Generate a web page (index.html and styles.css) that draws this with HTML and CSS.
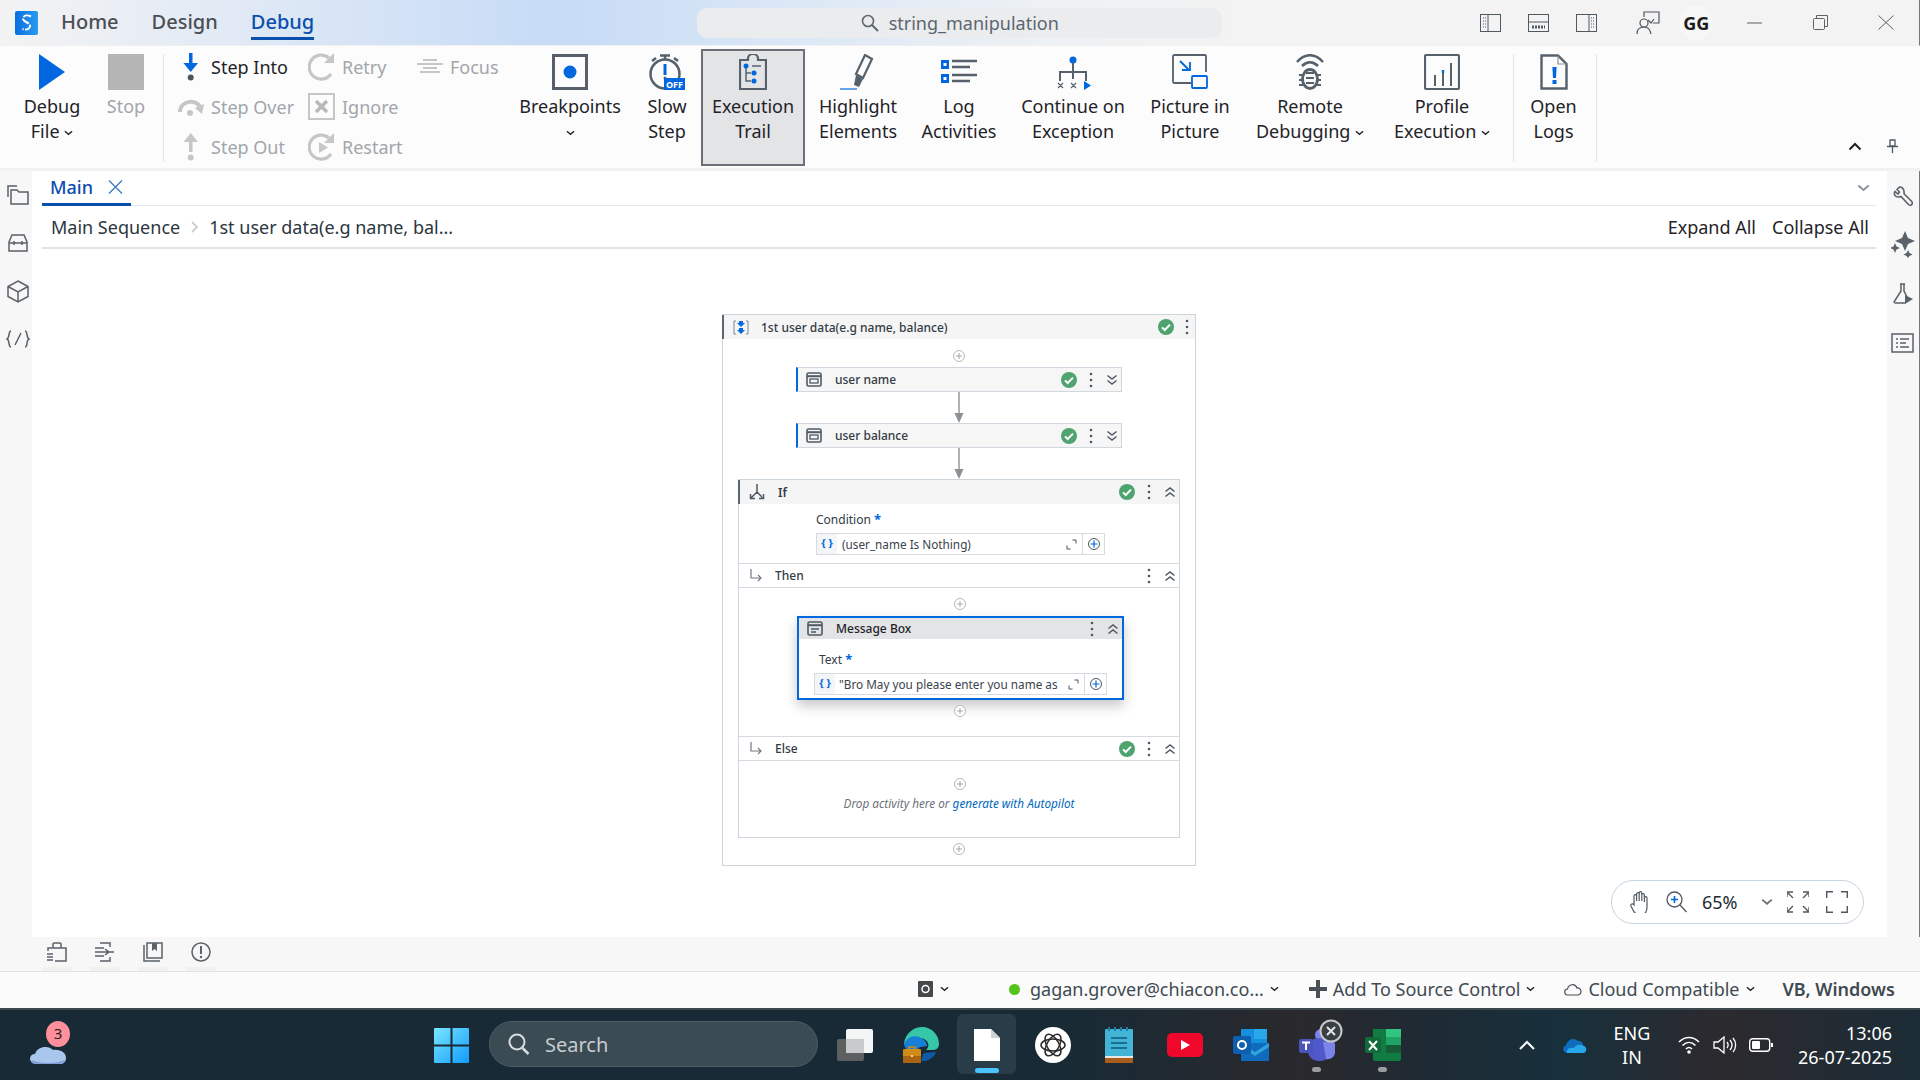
FILE: index.html
```html
<!DOCTYPE html>
<html lang="en">
<head>
<meta charset="UTF-8">
<meta name="viewport" content="width=device-width, initial-scale=1.0">
<title>string_manipulation - Debug</title>
<link rel="stylesheet" href="styles.css">
</head>
<body>
  <!-- shared small icons -->
  <svg class="defs" width="0" height="0">
    <symbol id="ok" viewBox="0 0 16 16"><circle cx="8" cy="8" r="8" fill="#4ea36f"/><path d="M4 8.400l2.700 2.600L12 5.600" fill="none" stroke="#fff" stroke-width="2"/></symbol>
    <symbol id="dots" viewBox="0 0 4 16"><circle cx="2" cy="2" r="1.300"/><circle cx="2" cy="8" r="1.300"/><circle cx="2" cy="14" r="1.300"/></symbol>
    <symbol id="dbl-down" viewBox="0 0 12 12"><path d="M1.500 1.500L6 5l4.500-3.500M1.500 6.500L6 10l4.500-3.500" fill="none" stroke="currentColor" stroke-width="1.500"/></symbol>
    <symbol id="dbl-up" viewBox="0 0 12 12"><path d="M1.500 5.500L6 2l4.500 3.500M1.500 10.500L6 7l4.500 3.500" fill="none" stroke="currentColor" stroke-width="1.500"/></symbol>
    <symbol id="add" viewBox="0 0 14 14"><circle cx="7" cy="7" r="5.500" fill="#fff" stroke="#b5b9bd"/><path d="M7 4v6M4 7h6" stroke="#a3a8ad"/></symbol>
    <symbol id="add-blue" viewBox="0 0 14 14"><circle cx="7" cy="7" r="5.500" fill="none" stroke="#4a5560"/><path d="M7 3.500v7M3.500 7h7" stroke="#0067df" stroke-width="1.200"/></symbol>
    <symbol id="grow" viewBox="0 0 11 11"><path d="M6.500 1H10v3.500M1 6.500V10h3.500" fill="none" stroke="#4a5560"/></symbol>
    <symbol id="branch" viewBox="0 0 14 14"><path d="M2 0v9h10M9 6l3 3-3 3" fill="none" stroke="#717a82" stroke-width="1.200"/></symbol>
    <symbol id="assign" viewBox="0 0 16 15"><rect x="1" y="1" width="14" height="13" rx="1.500" fill="none" stroke="#4f5a64" stroke-width="1.600"/><path d="M1 4.200h14" stroke="#4f5a64" stroke-width="2"/><rect x="4" y="7" width="8" height="4" fill="none" stroke="#4f5a64" stroke-width="1.300"/></symbol>
    <symbol id="down" viewBox="0 0 10 6"><path d="M1 1l4 3.500L9 1" fill="none" stroke="currentColor" stroke-width="1.500"/></symbol>
    <symbol id="arrow" viewBox="0 0 10 31"><path d="M5 0v22" stroke="#8d9093" stroke-width="1.400"/><path d="M0.500 21h9L5 31z" fill="#8d9093"/></symbol>
  </svg>

  <header class="titlebar">
    <svg class="logo" width="23" height="24" viewBox="0 0 23 24"><defs><linearGradient id="logoblue" x1="0" y1="0" x2="1" y2="0"><stop offset="0" stop-color="#0a6fe0"/><stop offset="1" stop-color="#2a9bf0"/></linearGradient></defs><rect width="23" height="24" rx="2" fill="url(#logoblue)"/><path d="M16 5.500C12 3.500 7.500 5 8 8s6.500 3.500 7 6.500-3.500 5-7.500 3.500" fill="none" stroke="#fff" stroke-width="2" stroke-dasharray="8 1.500"/></svg>
    <nav class="title-tabs">
      <span>Home</span>
      <span>Design</span>
      <span class="is-active">Debug</span>
    </nav>
    <div class="title-search">
      <svg width="18" height="18" viewBox="0 0 18 18"><circle cx="7" cy="7" r="5.500" fill="none" stroke="#5d6770" stroke-width="1.600"/><path d="M11 11l6 6" stroke="#5d6770" stroke-width="2"/></svg>
      <span>string_manipulation</span>
    </div>
    <div class="title-icons">
      <svg class="panel-l" width="21" height="18" viewBox="0 0 21 18"><rect x=".5" y=".5" width="20" height="17" fill="none" stroke="#4f5961"/><path d="M8 0v18" stroke="#4f5961"/><path d="M3 4h3M3 7h3M3 10h3M3 13h3" stroke="#4f5961" stroke-dasharray="1 1"/></svg>
      <svg class="panel-b" width="21" height="18" viewBox="0 0 21 18"><rect x=".5" y=".5" width="20" height="17" fill="none" stroke="#4f5961"/><path d="M0 8h21" stroke="#4f5961"/><path d="M4 13h13" stroke="#4f5961" stroke-width="3" stroke-dasharray="2 1"/></svg>
      <svg class="panel-r" width="21" height="18" viewBox="0 0 21 18"><rect x=".5" y=".5" width="20" height="17" fill="none" stroke="#4f5961"/><path d="M13 0v18" stroke="#4f5961"/><path d="M15 4h3M15 7h3M15 10h3M15 13h3" stroke="#4f5961" stroke-dasharray="1 1"/></svg>
      <svg class="feedback" width="24" height="23" viewBox="0 0 24 23"><circle cx="8" cy="12" r="4" fill="none" stroke="#4f5961" stroke-width="1.200"/><path d="M1 23c0-5 3-7 7-7s6 2 7 7M8 6V1h15v11h-6M12 9l3 3 3-4" fill="none" stroke="#4f5961" stroke-width="1.200"/></svg>
      <span class="avatar">GG</span>
      <svg class="win-min" width="15" height="2" viewBox="0 0 15 2"><path d="M0 1h15" stroke="#5b6269"/></svg>
      <svg class="win-max" width="15" height="15" viewBox="0 0 15 15"><rect x=".5" y="3.500" width="11" height="11" rx="1" fill="none" stroke="#5b6269"/><path d="M3.500 3V.5H14.500V11.500H12" fill="none" stroke="#5b6269"/></svg>
      <svg class="win-close" width="16" height="15" viewBox="0 0 16 15"><path d="M.5.5l15 14M15.500.5L.5 14.500" stroke="#5b6269"/></svg>
    </div>
  </header>

  <section class="ribbon">
    <div class="rbtn">
      <svg width="26" height="36" viewBox="0 0 26 36"><path d="M0 0l26 18L0 36z" fill="#0067df"/></svg>
      <span>Debug<br>File <svg class="caret" width="9" height="6"><use href="#down"/></svg></span>
    </div>
    <div class="rbtn is-off">
      <svg width="36" height="36" viewBox="0 0 36 36"><rect width="36" height="36" fill="#b5b5b5"/></svg>
      <span>Stop</span>
    </div>
    <div class="rsep"></div>

    <div class="steps">
      <div class="step">
        <svg width="28" height="28" viewBox="0 0 28 28"><path d="M12 0h3.500v10H21l-7.300 9-7.300-9H12z" fill="#0067df"/><circle cx="13.700" cy="24.500" r="3" fill="#4c5660"/></svg>
        <span>Step Into</span>
      </div>
      <div class="step is-off">
        <svg width="28" height="28" viewBox="0 0 28 28"><path d="M3 19C3 7 21 5 24 16" fill="none" stroke="#c6c6c6" stroke-width="4"/><path d="M27 11l-2 10-7-6z" fill="#c6c6c6"/><circle cx="13" cy="20" r="3" fill="#c6c6c6"/></svg>
        <span>Step Over</span>
      </div>
      <div class="step is-off">
        <svg width="28" height="28" viewBox="0 0 28 28"><path d="M12 19V9H6.500L13.700 0 21 9h-5.500v10z" fill="#c6c6c6"/><circle cx="13.700" cy="24.500" r="3" fill="#c6c6c6"/></svg>
        <span>Step Out</span>
      </div>
      <div class="step is-off">
        <svg width="28" height="28" viewBox="0 0 28 28"><path d="M23 21A12 12 0 1 1 21 5" fill="none" stroke="#c6c6c6" stroke-width="3.200"/><path d="M26 0v10H16z" fill="#c6c6c6"/></svg>
        <span>Retry</span>
      </div>
      <div class="step is-off">
        <svg width="28" height="28" viewBox="0 0 28 28"><rect x="1" y="1" width="25" height="25" fill="none" stroke="#c6c6c6" stroke-width="2"/><path d="M8 8l11 11M19 8L8 19" stroke="#b9b9b9" stroke-width="3.500"/></svg>
        <span>Ignore</span>
      </div>
      <div class="step is-off">
        <svg width="28" height="28" viewBox="0 0 28 28"><path d="M23 21A12 12 0 1 1 21 5" fill="none" stroke="#c6c6c6" stroke-width="3.200"/><path d="M26 0v10H16z" fill="#c6c6c6"/><path d="M11 9l9 5.500-9 5.500z" fill="#c6c6c6"/></svg>
        <span>Restart</span>
      </div>
      <div class="step is-off">
        <svg width="28" height="28" viewBox="0 0 28 28"><path d="M7 7h14M1 11h26M7 15h14M4 19h20" stroke="#c6c6c6" stroke-width="2"/></svg>
        <span>Focus</span>
      </div>
    </div>

    <div class="rbtn">
      <svg width="36" height="36" viewBox="0 0 36 36"><rect x="1.500" y="1.500" width="33" height="33" fill="none" stroke="#56616b" stroke-width="3"/><circle cx="18" cy="18" r="6.500" fill="#0067df"/></svg>
      <span>Breakpoints<br><svg class="caret" width="9" height="6"><use href="#down"/></svg></span>
    </div>
    <div class="rbtn rbtn-slow">
      <svg width="36" height="36" viewBox="0 0 36 36"><circle cx="16" cy="20" r="14.500" fill="none" stroke="#56616b" stroke-width="2.500"/><path d="M11 1.500h10M16 1v5M3 7l4-3M29 7l-4-3" stroke="#56616b" stroke-width="2.500"/><path d="M16 10v11" stroke="#0067df" stroke-width="3"/><circle cx="16" cy="24" r="1.500" fill="#56616b"/><rect x="15" y="24" width="21" height="12" fill="#0067df"/><text x="25.500" y="33.500" class="off-text">OFF</text></svg>
      <span>Slow<br>Step</span>
    </div>
    <div class="rbtn is-on">
      <svg width="28" height="36" viewBox="0 0 28 36"><path d="M9 6V4.500a5 4.500 0 0 1 10 0V6h8v29H1V6z" fill="none" stroke="#56616b" stroke-width="2.200"/><path d="M7 11v16h5M7 19h5" fill="none" stroke="#56616b" stroke-width="1.500"/><circle cx="7" cy="12" r="2.500" fill="#0067df"/><circle cx="15" cy="19" r="2.500" fill="#0067df"/><circle cx="15" cy="27" r="2.500" fill="#0067df"/><path d="M13 12h9" stroke="#56616b" stroke-width="1.500"/></svg>
      <span>Execution<br>Trail</span>
    </div>
    <div class="rbtn">
      <svg width="36" height="36" viewBox="0 0 36 36"><path d="M25 1l7 4-9 19-7-4z" fill="none" stroke="#56616b" stroke-width="2.200"/><path d="M16 21l7 4-4 8-5-2z" fill="#56616b"/><path d="M0 35h17" stroke="#0067df" stroke-width="1.200"/></svg>
      <span>Highlight<br>Elements</span>
    </div>
    <div class="rbtn">
      <svg width="36" height="36" viewBox="0 0 36 36"><rect x="0" y="6" width="8" height="9" fill="#0067df"/><rect x="0" y="20" width="8" height="9" fill="#0067df"/><rect x="2.500" y="9" width="3" height="3" fill="#fff"/><rect x="2.500" y="23" width="3" height="3" fill="#fff"/><path d="M11 7h25M11 13h18M11 21h25M11 27h18" stroke="#56616b" stroke-width="2.400"/></svg>
      <span>Log<br>Activities</span>
    </div>
    <div class="rbtn">
      <svg width="36" height="36" viewBox="0 0 36 36"><circle cx="18" cy="6" r="3.500" fill="#0067df"/><path d="M18 9v9M5 27v-9h26v9M18 18v7" fill="none" stroke="#56616b" stroke-width="2"/><path d="M3 29l5 5M8 29l-5 5M16 29l5 5M21 29l-5 5" stroke="#56616b" stroke-width="1.200"/><path d="M29 27l7 4.500-7 4.500z" fill="#0067df"/></svg>
      <span>Continue on<br>Exception</span>
    </div>
    <div class="rbtn">
      <svg width="36" height="36" viewBox="0 0 36 36"><path d="M19 29H2.500a1.500 1.500 0 0 1-1.500-1.500V2.500A1.500 1.500 0 0 1 2.500 1H33a1 1 0 0 1 1 1v16" fill="none" stroke="#56616b" stroke-width="1.800"/><rect x="20" y="22" width="15" height="12" rx="1" fill="none" stroke="#0067df" stroke-width="1.800"/><path d="M8 7l9 9M10 16h8V8" fill="none" stroke="#0067df" stroke-width="1.800"/></svg>
      <span>Picture in<br>Picture</span>
    </div>
    <div class="rbtn">
      <svg width="36" height="36" viewBox="0 0 36 36"><path d="M5 8c8-9 18-9 26 0M10 12c5-5 11-5 16 0" fill="none" stroke="#56616b" stroke-width="2.600"/><ellipse cx="18" cy="25" rx="7.500" ry="9.500" fill="none" stroke="#56616b" stroke-width="2.800"/><path d="M14 19h8M14 24h8M14 29h8M7 21h4M7 26h4M7 31h4M25 21h4M25 26h4M25 31h4" stroke="#56616b" stroke-width="2"/></svg>
      <span>Remote<br>Debugging <svg class="caret" width="9" height="6"><use href="#down"/></svg></span>
    </div>
    <div class="rbtn">
      <svg width="36" height="36" viewBox="0 0 36 36"><rect x="1" y="1" width="34" height="34" rx="1.500" fill="none" stroke="#56616b" stroke-width="2.200"/><path d="M11 21v11M19 16v16M27 9v23" stroke="#56616b" stroke-width="2"/><path d="M19 16v3" stroke="#0067df" stroke-width="2.400"/></svg>
      <span>Profile<br>Execution <svg class="caret" width="9" height="6"><use href="#down"/></svg></span>
    </div>
    <div class="rsep rsep-b"></div>
    <div class="rbtn">
      <svg width="28" height="36" viewBox="0 0 28 36"><path d="M1.500 1.500H18L26.500 10v24.500h-25z" fill="none" stroke="#56616b" stroke-width="2.400"/><path d="M18 1.500V10h8.500" fill="none" stroke="#8a939b" stroke-width="1.200"/><path d="M12.400 13h4.200l-.6 11h-3z" fill="#0067df"/><rect x="12.500" y="26" width="4" height="4" fill="#0067df"/></svg>
      <span>Open<br>Logs</span>
    </div>
    <div class="rsep rsep-c"></div>
    <div class="ribbon-end">
      <svg width="14" height="9" viewBox="0 0 14 9"><path d="M1.500 7.500L7 2l5.500 5.500" fill="none" stroke="#222" stroke-width="2"/></svg>
      <svg width="11" height="14" viewBox="0 0 11 14"><path d="M2.500 1h6M3 1v6h5V1M0 7.500h11M5.500 8v6" fill="none" stroke="#4f5961" stroke-width="1.300"/></svg>
    </div>
  </section>

  <div class="workspace">
    <aside class="rail">
      <span class="rail-slot"><svg width="22" height="20" viewBox="0 0 22 20"><path d="M1 12V1h9" fill="none" stroke="#5b6269" stroke-width="1.500"/><path d="M4 5v14h17V7H12l-2-2z" fill="none" stroke="#5b6269" stroke-width="1.500"/></svg></span>
      <span class="rail-slot"><svg width="20" height="18" viewBox="0 0 20 18"><path d="M1 8l3-7h12l3 7v9H1zM1 9h18M6 7v4M14 7v4" fill="none" stroke="#5b6269" stroke-width="1.500"/></svg></span>
      <span class="rail-slot"><svg width="22" height="23" viewBox="0 0 22 23"><path d="M11 1l10 5.500v10L11 22 1 16.500v-10zM1 6.500l10 5.500 10-5.500M11 12v10" fill="none" stroke="#5b6269" stroke-width="1.500"/></svg></span>
      <span class="rail-slot"><svg width="24" height="18" viewBox="0 0 24 18"><path d="M5 1C2 1 4 8 1 9c3 1 1 8 4 8M19 1c3 0 1 7 4 8-3 1-1 8-4 8M9 15l6-12" fill="none" stroke="#5b6269" stroke-width="1.500"/></svg></span>
    </aside>

    <main class="canvas-col">
      <div class="tabs">
        <div class="tab">Main
          <svg width="15" height="14" viewBox="0 0 15 14"><path d="M1 .5l13 13M14 .5l-13 13" stroke="#3b78c4" stroke-width="1.300"/></svg>
        </div>
        <svg class="tabs-more" width="13" height="8"><use href="#down"/></svg>
      </div>
      <div class="crumbs">
        <span>Main Sequence</span>
        <svg width="7" height="12" viewBox="0 0 7 12"><path d="M1 1l5 5-5 5" fill="none" stroke="#c9cfd5" stroke-width="1.800"/></svg>
        <span>1st user data(e.g name, bal...</span>
        <span class="crumbs-act">Expand All</span>
        <span class="crumbs-act">Collapse All</span>
      </div>

      <div class="canvas">
        <div class="seq">
          <div class="head head-main">
            <svg class="head-ico" width="16" height="15" viewBox="0 0 16 15"><path d="M3 1H1v13h2M13 1h2v13h-2" fill="none" stroke="#7b858e"/><path d="M6 1h4v2h2L8 7 4 3h2zM6 8h4v2h2l-4 4-4-4h2z" fill="#0067df"/></svg>
            <span class="head-txt">1st user data(e.g name, balance)</span>
            <svg class="ok" width="16" height="16"><use href="#ok"/></svg>
            <svg class="dots" width="4" height="16"><use href="#dots"/></svg>
          </div>
          <svg class="plus" width="14" height="14"><use href="#add"/></svg>
          <div class="card">
            <svg class="head-ico" width="16" height="15"><use href="#assign"/></svg>
            <span class="head-txt">user name</span>
            <svg class="ok" width="16" height="16"><use href="#ok"/></svg>
            <svg class="dots" width="4" height="16"><use href="#dots"/></svg>
            <svg class="chev" width="12" height="12"><use href="#dbl-down"/></svg>
          </div>
          <svg class="link" width="10" height="31"><use href="#arrow"/></svg>
          <div class="card">
            <svg class="head-ico" width="16" height="15"><use href="#assign"/></svg>
            <span class="head-txt">user balance</span>
            <svg class="ok" width="16" height="16"><use href="#ok"/></svg>
            <svg class="dots" width="4" height="16"><use href="#dots"/></svg>
            <svg class="chev" width="12" height="12"><use href="#dbl-down"/></svg>
          </div>
          <svg class="link link-b" width="10" height="31"><use href="#arrow"/></svg>

          <div class="ifbox">
            <div class="head head-if">
              <svg class="head-ico" width="16" height="16" viewBox="0 0 16 16"><path d="M8 0v8M8 8l-6 6M8 8l6 6M1.500 10v4.500H6M14.500 10v4.500H10" fill="none" stroke="#4f5a64" stroke-width="1.500"/></svg>
              <span class="head-txt head-strong">If</span>
              <svg class="ok" width="16" height="16"><use href="#ok"/></svg>
              <svg class="dots" width="4" height="16"><use href="#dots"/></svg>
              <svg class="chev" width="12" height="12"><use href="#dbl-up"/></svg>
            </div>
            <label class="lbl lbl-cond">Condition <b>*</b></label>
            <div class="field field-cond">
              <span class="brace">{ }</span>
              <span class="field-val">(user_name Is Nothing)</span>
              <svg width="11" height="11"><use href="#grow"/></svg>
              <span class="field-add"><svg width="14" height="14"><use href="#add-blue"/></svg></span>
            </div>

            <div class="branch">
              <svg width="14" height="14"><use href="#branch"/></svg>
              <span class="head-txt">Then</span>
              <svg class="dots" width="4" height="16"><use href="#dots"/></svg>
              <svg class="chev" width="12" height="12"><use href="#dbl-up"/></svg>
            </div>
            <svg class="plus plus-then" width="14" height="14"><use href="#add"/></svg>
            <div class="msgbox">
              <div class="msg-head">
                <svg class="head-ico" width="16" height="15" viewBox="0 0 16 15"><rect x="1" y="1" width="14" height="13" rx="1.500" fill="none" stroke="#4f5a64" stroke-width="1.600"/><path d="M1 4.200h14" stroke="#4f5a64" stroke-width="2"/><path d="M4 8h8M4 11h5" stroke="#4f5a64" stroke-width="1.300"/></svg>
                <span class="head-txt">Message Box</span>
                <svg class="dots" width="4" height="16"><use href="#dots"/></svg>
                <svg class="chev" width="12" height="12"><use href="#dbl-up"/></svg>
              </div>
              <label class="lbl lbl-text">Text <b>*</b></label>
              <div class="field field-text">
                <span class="brace">{ }</span>
                <span class="field-val">"Bro May you please enter you name as</span>
                <svg width="11" height="11"><use href="#grow"/></svg>
                <span class="field-add"><svg width="14" height="14"><use href="#add-blue"/></svg></span>
              </div>
            </div>
            <svg class="plus plus-then plus-after" width="14" height="14"><use href="#add"/></svg>

            <div class="branch">
              <svg width="14" height="14"><use href="#branch"/></svg>
              <span class="head-txt">Else</span>
              <svg class="ok" width="16" height="16"><use href="#ok"/></svg>
              <svg class="dots" width="4" height="16"><use href="#dots"/></svg>
              <svg class="chev" width="12" height="12"><use href="#dbl-up"/></svg>
            </div>
            <svg class="plus plus-then plus-else" width="14" height="14"><use href="#add"/></svg>
            <p class="drop">Drop activity here or <a href="#">generate with Autopilot</a></p>
          </div>
          <svg class="plus plus-end" width="14" height="14"><use href="#add"/></svg>
        </div>

        <div class="zoombar">
          <svg class="z-hand" width="20" height="22" viewBox="0 0 20 22"><path d="M4 12V5a1.300 1.300 0 0 1 2.600 0v5-7a1.300 1.300 0 0 1 2.600 0v7-8a1.300 1.300 0 0 1 2.600 0v8-6a1.300 1.300 0 0 1 2.600 0v7-4a1.300 1.300 0 0 1 2.600 0v9c0 5-2.500 8-7 8-4 0-5.500-2-7-5l-2-4c-.8-2 1.500-3 3-1z" fill="none" stroke="#4f5961" stroke-width="1.200"/></svg>
          <svg class="z-mag" width="21" height="22" viewBox="0 0 21 22"><circle cx="8.500" cy="8.500" r="7.500" fill="none" stroke="#4f5961" stroke-width="1.300"/><path d="M14 14l6.500 7" stroke="#4f5961" stroke-width="1.300"/><path d="M8.500 5v7M5 8.500h7" stroke="#0067df" stroke-width="1.600"/></svg>
          <span class="z-val">65%</span>
          <svg class="z-down" width="12" height="8"><use href="#down"/></svg>
          <svg class="z-fit" width="22" height="22" viewBox="0 0 22 22"><path d="M0 6V1h6M16 1h6v5M22 16v5h-6M6 21H0v-5M1 2l5 5M21 2l-5 5M21 20l-5-5M1 20l5-5" fill="none" stroke="#4f5961" stroke-width="1.400"/></svg>
          <svg class="z-full" width="22" height="22" viewBox="0 0 22 22"><path d="M.7 7V.7H7M15 .7h6.300V7M21.300 15v6.300H15M7 21.300H.7V15" fill="none" stroke="#4f5961" stroke-width="1.400"/></svg>
        </div>
      </div>
    </main>

    <aside class="rail rail-right">
      <span class="rail-slot"><svg width="20" height="20" viewBox="0 0 20 20"><path d="M6.500 1L4 3.500 6.500 6 5 8 2 5.500C.5 8 2 11.500 6 11l2-.5 7.500 8c1 1 2.500 1 3.300 0s.7-2.200-.3-3.200l-7.500-7.500c.5-3.500-1-7-4.500-6.800z" fill="none" stroke="#5b6269" stroke-width="1.600"/></svg></span>
      <span class="rail-slot"><svg width="24" height="27" viewBox="0 0 24 27"><path d="M14 0l3 7 7 3-7 3-3 7-3-7-7-3 7-3zM4 12l1.500 3.500L9 17l-3.500 1.500L4 22l-1.500-3.500L-1 17l3.500-1.500zM17 19l1.500 3 3 1.500-3 1.500-1.500 2-1.500-2-3-1.500 3-1.500z" fill="#5b6269"/></svg></span>
      <span class="rail-slot"><svg width="20" height="21" viewBox="0 0 20 21"><path d="M7 1h5M8 1v7L1 19c0 1 1 1 2 1h9M11 1v7l3 6" fill="none" stroke="#5b6269" stroke-width="1.500"/><path d="M4 15h7M12 12l8 4-8 5z" fill="#5b6269"/></svg></span>
      <span class="rail-slot rail-list"><svg width="23" height="20" viewBox="0 0 23 20"><rect x="1" y="1" width="21" height="18" fill="none" stroke="#5b6269" stroke-width="1.500"/><path d="M5 6h2M9 6h9M5 10h2M9 10h6M5 14h2M9 14h9" stroke="#5b6269" stroke-width="1.500"/></svg></span>
    </aside>
  </div>

  <div class="panelbar">
    <span class="panel-btn"><svg width="20" height="20" viewBox="0 0 20 20"><path d="M1 9V6h18v13H8M6 6V2a1 1 0 0 1 1-1h6a1 1 0 0 1 1 1v4" fill="none" stroke="#5b6269" stroke-width="1.500"/><path d="M0 12h6M0 15h6M0 18h6" stroke="#5b6269" stroke-width="1.500"/></svg></span>
    <span class="panel-btn"><svg width="20" height="20" viewBox="0 0 20 20"><path d="M5 1h10v4M15 15v4H5M0 6h9M0 10h13M0 14h9M10 7l4 3-4 3M14 10h5" fill="none" stroke="#5b6269" stroke-width="1.500"/></svg></span>
    <span class="panel-btn"><svg width="20" height="20" viewBox="0 0 20 20"><path d="M1 3v16h16" fill="none" stroke="#5b6269" stroke-width="1.500"/><rect x="4" y="1" width="15" height="15" fill="none" stroke="#5b6269" stroke-width="1.500"/><path d="M9 1v8l2.500-2L14 9V1" fill="#5b6269"/></svg></span>
    <span class="panel-btn"><svg width="20" height="20" viewBox="0 0 20 20"><circle cx="10" cy="10" r="9" fill="none" stroke="#5b6269" stroke-width="1.500"/><path d="M10 4v8" stroke="#5b6269" stroke-width="2"/><circle cx="10" cy="15" r="1.200" fill="#5b6269"/></svg></span>
  </div>

  <footer class="statusbar">
    <span class="st-box"><svg width="15" height="16" viewBox="0 0 15 16"><rect width="15" height="16" rx="1" fill="#46494c"/><circle cx="7.500" cy="8" r="3.500" fill="none" stroke="#fff" stroke-width="1.500"/></svg><svg class="caret" width="9" height="6"><use href="#down"/></svg></span>
    <span class="st-item st-user"><i class="dot-on"></i>gagan.grover@chiacon.co... <svg class="caret" width="9" height="6"><use href="#down"/></svg></span>
    <span class="st-item st-source"><svg width="18" height="18" viewBox="0 0 18 18"><path d="M9 0v18M0 9h18" stroke="#4a5057" stroke-width="4"/></svg>Add To Source Control <svg class="caret" width="9" height="6"><use href="#down"/></svg></span>
    <span class="st-item st-cloud"><svg width="18" height="13" viewBox="0 0 18 13"><path d="M4 12a3 3 0 0 1-.5-6C4.500 1 11 0 13 5c5-.5 5.500 7 .5 7z" fill="none" stroke="#4a5057" stroke-width="1.200"/></svg>Cloud Compatible <svg class="caret" width="9" height="6"><use href="#down"/></svg></span>
    <span class="st-item st-lang">VB, Windows</span>
  </footer>

  <div class="taskbar">
    <div class="tb-weather">
      <svg width="36" height="24" viewBox="0 0 36 24"><path d="M6 23C2 23 0 20 0 17.500S2 13 5 13c2-8 14-9 18-4 8-1 13 3 13 8 0 4-3 6-6 6z" fill="#a9c6ec"/><path d="M1 19c10 4 24 4 34 0-1 3-3 4-5 4H6c-2 0-4-1-5-4z" fill="#7f9fd8"/></svg>
      <span class="tb-badge">3</span>
    </div>
    <svg class="tb-start" width="35" height="35" viewBox="0 0 35 35"><defs><linearGradient id="winblue" x1="0" y1="0" x2="1" y2="1"><stop offset="0" stop-color="#7ae7fe"/><stop offset="1" stop-color="#109bff"/></linearGradient></defs><path d="M1 0h15.500v16.500H0V1a1 1 0 0 1 1-1zM18.500 0H34a1 1 0 0 1 1 1v15.500H18.500zM0 18.500h16.500V35H1a1 1 0 0 1-1-1zM18.500 18.500H35V34a1 1 0 0 1-1 1H18.500z" fill="url(#winblue)"/></svg>
    <div class="tb-search">
      <svg width="22" height="22" viewBox="0 0 22 22"><circle cx="9" cy="9" r="7.500" fill="none" stroke="#d8dcdf" stroke-width="2"/><path d="M14.500 15l6 6" stroke="#d8dcdf" stroke-width="2.500"/></svg>
      <span>Search</span>
    </div>
    <div class="tb-apps">
      <span class="tb-app"><svg width="36" height="32" viewBox="0 0 36 32"><rect x="0" y="10" width="27" height="22" rx="2" fill="#5d5f60"/><rect x="9" y="0" width="27" height="24" rx="2" fill="#f4f5f5"/><rect x="9" y="10" width="18" height="14" fill="#c9cacb"/></svg></span>
      <span class="tb-app"><svg width="36" height="36" viewBox="0 0 36 36"><path d="M1 17C2 6 11 0 19 0c10 0 17 8 17 17 0 3-2 6-6 6h-7c2-2 3-4 2-7-2-5-9-6-13-3-5 3-9 6-11 4z" fill="#36c6a8"/><path d="M1 17c3-7 10-9 15-7 5 2 8 5 8 9l-6 1c-4 0-4 6-2 9-7-1-14-6-15-12z" fill="#1680d8"/><path d="M18 34c6 1 13-3 15-9l-12 1c-2 2-2 6-3 8z" fill="#0e5aa8"/><rect x="0" y="22" width="18" height="14" rx="1" fill="#d08a16"/><rect x="0" y="29" width="18" height="7" fill="#a96412"/><path d="M6 22v-2h6v2" fill="none" stroke="#d08a16" stroke-width="1.500"/><rect x="8" y="28" width="2" height="2" fill="#f4d58a"/></svg></span>
      <span class="tb-app is-open"><svg width="26" height="32" viewBox="0 0 26 32"><path d="M0 0h17l9 9v23H0z" fill="#fff"/><path d="M17 0v9h9z" fill="#cfd3d6"/></svg></span>
      <span class="tb-app"><svg width="36" height="36" viewBox="0 0 36 36"><circle cx="18" cy="18" r="18" fill="#fff"/><g fill="none" stroke="#2a2a2a" stroke-width="1.500"><ellipse cx="18" cy="18" rx="12" ry="6"/><ellipse cx="18" cy="18" rx="12" ry="6" transform="rotate(60 18 18)"/><ellipse cx="18" cy="18" rx="12" ry="6" transform="rotate(120 18 18)"/></g></svg></span>
      <span class="tb-app"><svg width="28" height="36" viewBox="0 0 28 36"><rect x="0" y="2" width="28" height="30" rx="1" fill="#44b4d6"/><rect x="0" y="30" width="28" height="6" fill="#a85d1c"/><rect x="0" y="29" width="28" height="2" fill="#e8e8e8"/><path d="M6 11h16M6 16h16M6 21h16" stroke="#176f93" stroke-width="2"/><path d="M4 0v4M10 0v4M16 0v4M22 0v4" stroke="#1d7fa6" stroke-width="2"/></svg></span>
      <span class="tb-app"><svg width="36" height="24" viewBox="0 0 36 24"><rect width="36" height="24" rx="5" fill="#f0082c"/><path d="M14 7l9 5-9 5z" fill="#fff"/></svg></span>
      <span class="tb-app"><svg width="36" height="32" viewBox="0 0 36 32"><rect x="8" y="0" width="26" height="20" rx="1" fill="#1490df"/><rect x="21" y="0" width="13" height="10" fill="#28a8ea"/><path d="M8 14h28v17a1 1 0 0 1-1 1H9a1 1 0 0 1-1-1z" fill="#0f6cbd"/><path d="M8 14l14 9 14-9v4l-14 9-14-9z" fill="#50d9ff" opacity=".5"/><rect x="0" y="7" width="18" height="18" rx="2" fill="#0f5fb0"/><circle cx="9" cy="16" r="4" fill="none" stroke="#fff" stroke-width="2"/></svg></span>
      <span class="tb-app tb-running">
        <svg width="36" height="32" viewBox="0 0 36 32"><circle cx="22" cy="6" r="6" fill="#7b83eb"/><rect x="9" y="9" width="23" height="23" rx="10" fill="#5059c9"/><path d="M24 13h10a2 2 0 0 1 2 2v8c0 5-5 8-9 7z" fill="#7b83eb"/><rect x="0" y="10" width="14" height="14" rx="2" fill="#4b53bc"/><path d="M3 13.500h8M7 13.500V21" stroke="#fff" stroke-width="2"/></svg>
        <svg class="tb-x" width="24" height="24" viewBox="0 0 24 24"><circle cx="12" cy="12" r="10.500" fill="#3a3f44" stroke="#c5c8ca" stroke-width="2"/><path d="M8 8l8 8M16 8l-8 8" stroke="#e5e5e5" stroke-width="2"/></svg>
      </span>
      <span class="tb-app tb-running"><svg width="36" height="32" viewBox="0 0 36 32"><path d="M8 0h26a2 2 0 0 1 2 2v28a2 2 0 0 1-2 2H10a2 2 0 0 1-2-2z" fill="#107c41"/><rect x="21" y="0" width="15" height="8" fill="#33c481"/><rect x="21" y="8" width="15" height="8" fill="#21a366"/><rect x="21" y="16" width="15" height="8" fill="#185c37"/><rect x="0" y="8" width="16" height="16" rx="2" fill="#0f6b39"/><path d="M4 12l8 9M12 12l-8 9" stroke="#fff" stroke-width="2"/></svg></span>
    </div>
    <div class="tray">
      <svg class="tr-up" width="16" height="10" viewBox="0 0 16 10"><path d="M1 9l7-7 7 7" fill="none" stroke="#fff" stroke-width="2"/></svg>
      <svg class="tr-drive" width="24" height="15" viewBox="0 0 24 15"><path d="M4 15a4 4 0 0 1-1-7.800C4.500 1 11 -1 15 3c4 0 5 2 5 4l-4 1z" fill="#0f6cbd"/><path d="M4 15h16c4 0 5-7-1-8-3-1-7 0-8 3-4-1-8 1-7 5z" fill="#28a8ea"/></svg>
      <div class="tr-lang">ENG<br>IN</div>
      <svg class="tr-wifi" width="22" height="18" viewBox="0 0 22 18"><path d="M1 6c6-6 14-6 20 0M4.500 9.500c4-4 9-4 13 0M8 13c2-2 4-2 6 0" fill="none" stroke="#fff" stroke-width="1.600"/><circle cx="11" cy="16" r="1.800" fill="#fff"/></svg>
      <svg class="tr-vol" width="24" height="18" viewBox="0 0 24 18"><path d="M1 6h4l6-5v16l-6-5H1z" fill="none" stroke="#fff" stroke-width="1.300"/><path d="M14 6c1.500 2 1.500 4 0 6M17 4c2.500 3 2.500 7 0 10M20 2c3.500 4 3.500 10 0 14" fill="none" stroke="#fff" stroke-width="1.300"/></svg>
      <svg class="tr-batt" width="24" height="14" viewBox="0 0 24 14"><rect x=".7" y=".7" width="20" height="12.600" rx="3" fill="none" stroke="#fff" stroke-width="1.400"/><rect x="3" y="3" width="8" height="8" rx="1" fill="#fff"/><rect x="22" y="5" width="2" height="4" fill="#fff"/></svg>
      <div class="tr-clock">13:06<br>26-07-2025</div>
    </div>
  </div>
</body>

</html>
```

FILE: styles.css
```css
* {
  box-sizing: border-box;
}

html, body {
  margin: 0;
  padding: 0;
}

body {
  width: 1920px;
  height: 1080px;
  overflow: hidden;
  display: flex;
  flex-direction: column;
  font-family: "Noto Sans", "Open Sans", sans-serif;
  font-size: 18px;
  color: #222a31;
  background-color: #f7f7f7;
}

svg {
  flex: none;
  display: block;
}

.defs {
  position: absolute;
}

/* title bar */

.titlebar {
  flex: none;
  height: 46px;
  display: flex;
  align-items: center;
  padding-left: 15px;
  border-bottom: 1px solid #f1f1f1;
  border-right: 1px solid #777;
  background: linear-gradient(90deg, #f3f3f3 0, #e4ebf5 200px, #c6dbf6 560px, #dce8f6 800px, #eef1f4 1050px, #f3f3f3 1250px);
}

.title-tabs {
  display: flex;
  align-self: flex-start;
  gap: 33px;
  margin-left: 23px;
  font-size: 20px;
  font-weight: 500;
  color: #4b4f54;
}

.title-tabs span {
  height: 40px;
  line-height: 44px;
}

.title-tabs .is-active {
  color: #0b4fad;
  border-bottom: 3px solid #0b4fad;
}

.title-search {
  width: 525px;
  height: 30px;
  margin-left: 383px;
  display: flex;
  align-items: center;
  justify-content: center;
  gap: 10px;
  border-radius: 10px;
  background-color: #eaecee;
  color: #5c6670;
}

.title-icons {
  flex: 1;
  display: flex;
  align-items: center;
  padding-left: 258px;
}

.panel-b,
.panel-r {
  margin-left: 27px;
}

.feedback {
  margin-left: 39px;
}

.avatar {
  width: 34px;
  height: 34px;
  margin-left: 19px;
  border-radius: 50%;
  background-color: #f7f7f7;
  text-align: center;
  line-height: 34px;
  font-weight: 700;
  font-size: 18px;
  color: #1c1c1c;
}

.win-min {
  margin-left: 34px;
}

.win-max {
  margin-left: 51px;
}

.win-close {
  margin-left: 50px;
}

/* ribbon */

.ribbon {
  flex: none;
  height: 125px;
  display: grid;
  grid-template-columns: 15px 74px 74px 3px 354px 100px 81px 104px 106px 96px 132px 102px 138px 126px 8px 1px 79px 3px 1px auto;
  border-bottom: 3px solid #f1f1f1;
  background-color: #fcfcfc;
  line-height: 25px;
}

.rbtn {
  display: flex;
  flex-direction: column;
  align-items: center;
  padding-top: 8px;
  text-align: center;
  color: #1f2328;
}

.rbtn > svg {
  height: 36px;
}

.rbtn > span {
  margin-top: 4px;
}

.rbtn:first-child {
  grid-column: 2;
}

.rbtn-slow {
  padding-left: 13px;
}

.rbtn.is-off {
  color: #a2a6aa;
}

.rbtn.is-on {
  margin: 3px 0 2px;
  padding-top: 3px;
  border: 2px solid #6b7178;
  background-color: #e3e4e5;
}

.caret {
  display: inline-block;
  vertical-align: 2px;
  color: #222;
}

.rsep {
  width: 1px;
  height: 108px;
  margin-top: 8px;
  background-color: #e4e4e4;
}

.rsep-b {
  grid-column: 16;
}

.rsep-c {
  grid-column: 19;
}

.steps {
  padding: 1px 0 0 11px;
  display: grid;
  grid-template-rows: repeat(3, 40px);
  grid-template-columns: 131px 108px auto;
  grid-auto-flow: column;
}

.step {
  display: flex;
  align-items: center;
  gap: 6px;
  color: #1f2328;
}

.step.is-off {
  color: #a2a6aa;
}

.off-text {
  font-size: 9px;
  font-weight: 700;
  fill: #fff;
  text-anchor: middle;
}

.ribbon-end {
  display: flex;
  justify-content: flex-end;
  align-items: center;
  align-self: start;
  gap: 25px;
  margin-top: 93px;
  padding-right: 22px;
}

/* workspace */

.workspace {
  flex: 1;
  min-height: 0;
  display: flex;
}

.rail {
  flex: none;
  width: 32px;
  display: flex;
  flex-direction: column;
  background-color: #f7f7f7;
}

.rail-slot {
  height: 48px;
  display: flex;
  align-items: center;
  justify-content: center;
  padding-left: 3px;
}

.rail-right {
  width: 33px;
  border-right: 1px solid #777;
}

.rail-right .rail-slot {
  height: 49px;
  padding: 0;
}

.rail-right .rail-list {
  padding-right: 2px;
}

.canvas-col {
  flex: 1;
  min-width: 0;
  display: flex;
  flex-direction: column;
  background-color: #fff;
}

.tabs {
  flex: none;
  height: 35px;
  margin: 0 11px 0 10px;
  display: flex;
  align-items: center;
  justify-content: space-between;
  border-bottom: 1px solid #e4e7ea;
}

.tab {
  width: 89px;
  height: 35px;
  padding-left: 8px;
  display: flex;
  align-items: center;
  gap: 15px;
  border-bottom: 3px solid #0b4fad;
  color: #0b4fad;
  font-weight: 500;
}

.tabs-more {
  margin-right: 6px;
  color: #8b9298;
}

.crumbs {
  flex: none;
  height: 43px;
  margin: 0 11px 0 10px;
  padding: 0 7px 0 9px;
  display: flex;
  align-items: center;
  gap: 11px;
  border-bottom: 2px solid #dde3e9;
  color: #2b3640;
}

.crumbs-act {
  color: #1f2328;
}

.crumbs-act:nth-last-child(2) {
  margin-left: auto;
}

.crumbs-act:last-child {
  margin-left: 5px;
}

.canvas {
  flex: 1;
  position: relative;
  padding-top: 65px;
}

/* diagram */

.seq {
  width: 474px;
  height: 552px;
  margin-left: 690px;
  border: 1px solid #ccd5dc;
  font-size: 12px;
  color: #333b44;
}

.head {
  height: 24px;
  display: flex;
  align-items: center;
  background-color: #f5f5f6;
}

.head-main {
  margin-left: -1px;
  padding-left: 9px;
  border-left: 2px solid #5b6770;
}

.head-ico {
  margin-right: 13px;
}

.head-main .head-ico {
  margin-right: 12px;
}

.head-txt {
  font-weight: 500;
  flex: 1;
}

.head-strong {
  font-weight: 600;
}

.head-main .ok {
  margin-right: 11px;
}

.head-main .dots {
  margin-right: 6px;
}

.dots {
  fill: #4f5961;
}

.plus {
  display: block;
  margin: 10px auto 4px;
}

.card {
  width: 326px;
  height: 25px;
  margin-left: 73px;
  padding: 0 3px 0 8px;
  display: flex;
  align-items: center;
  background-color: #f6f6f6;
  border: 1px solid #d0d7de;
  border-left: 2px solid #0067df;
}

.card .dots,
.head-if .dots,
.branch .dots {
  margin: 0 13px 0 12px;
}

.chev {
  color: #4f5961;
}

.link {
  margin: 0 auto;
}

.ifbox {
  width: 442px;
  height: 359px;
  margin-left: 15px;
  border: 1px solid #ccd5dc;
}

.head-if {
  margin-left: -1px;
  padding: 0 3px 0 9px;
  border-left: 2px solid #5b6770;
}

.lbl {
  display: block;
  height: 16px;
  line-height: 16px;
}

.lbl b {
  color: #0067df;
  font-size: 13px;
  line-height: 1;
}

.lbl-cond {
  margin: 8px 0 5px 77px;
}

.lbl-text {
  margin: 13px 0 5px 20px;
}

.field {
  height: 22px;
  display: flex;
  align-items: center;
  border: 1px solid #d5dbe0;
  background-color: #fff;
  color: #3b434b;
  font-size: 11.75px;
}

.field-cond {
  width: 289px;
  margin-left: 77px;
}

.field-text {
  width: 293px;
  margin-left: 15px;
}

.brace {
  width: 20px;
  height: 100%;
  text-align: center;
  line-height: 18px;
  background-color: #f4f5f6;
  color: #0067df;
  font-size: 11px;
  font-weight: 700;
}

.field-val {
  flex: 1;
  padding-left: 5px;
  white-space: nowrap;
  overflow: hidden;
}

.field-text .field-val {
  padding-left: 4px;
}

.field-add {
  width: 22px;
  height: 100%;
  margin-left: 5px;
  display: flex;
  align-items: center;
  justify-content: center;
  border-left: 1px solid #d5dbe0;
}

.branch {
  height: 25px;
  margin: 8px 0 0;
  padding: 0 3px 0 10px;
  display: flex;
  align-items: center;
  border-top: 1px solid #d5dbe0;
  border-bottom: 1px solid #d5dbe0;
}

.branch .head-txt {
  margin-left: 12px;
}

.plus-then {
  margin: 9px 0 5px 214px;
}

.plus-after {
  margin: 4px 0 18px 214px;
}

.plus-after + .branch {
  margin-top: 0;
}

.plus-else {
  margin: 16px 0 4px 214px;
}

.plus-end {
  margin: 4px auto 0;
}

.msgbox {
  width: 327px;
  height: 84px;
  margin-left: 58px;
  border: 2px solid #0067df;
  background-color: #fff;
  box-shadow: 0 6px 12px rgba(0, 0, 0, 0.22);
}

.msg-head {
  height: 21px;
  padding: 0 3px 0 8px;
  display: flex;
  align-items: center;
  background-color: #e3e4e6;
  color: #1f2328;
}

.msg-head .dots {
  margin: 0 13px 0 12px;
}

.drop {
  margin: 0;
  text-align: center;
  font-size: 11.75px;
  line-height: 16px;
  font-style: italic;
  color: #6b7278;
}

.drop a {
  color: #0067c0;
  text-decoration: none;
}

/* zoom control */

.zoombar {
  position: absolute;
  right: 23px;
  bottom: 13px;
  width: 253px;
  height: 44px;
  padding-left: 18px;
  display: flex;
  align-items: center;
  border: 1px solid #c8d4de;
  border-radius: 22px;
  background-color: #fff;
}

.z-mag {
  margin-left: 16px;
}

.z-val {
  width: 40px;
  margin-left: 15px;
}

.z-down {
  margin-left: 19px;
  color: #6b7278;
}

.z-fit {
  margin-left: 14px;
}

.z-full {
  margin-left: 17px;
}

/* bottom strips */

.panelbar {
  flex: none;
  height: 35px;
  padding-left: 42px;
  display: flex;
  gap: 18px;
  border-bottom: 1px solid #e3e3e3;
  background-color: #f7f7f7;
}

.panel-btn {
  width: 30px;
  height: 34px;
  padding-top: 5px;
  display: flex;
  justify-content: center;
  border-bottom: 4px solid #f1f1f1;
}

.statusbar {
  flex: none;
  height: 36px;
  padding-bottom: 2px;
  display: flex;
  align-items: center;
  background-color: #fbfbfb;
  color: #3f4a52;
}

.st-box {
  margin-left: 918px;
  display: flex;
  align-items: center;
  gap: 7px;
}

.st-item {
  display: flex;
  align-items: center;
  gap: 6px;
  white-space: nowrap;
}

.st-user {
  margin-left: 60px;
}

.dot-on {
  width: 11px;
  height: 11px;
  margin-right: 4px;
  border-radius: 50%;
  background-color: #52c41a;
}

.st-source {
  margin-left: 30px;
}

.st-cloud {
  margin-left: 29px;
}

.st-lang {
  margin-left: 28px;
  font-weight: 600;
}

/* windows taskbar */

.taskbar {
  flex: none;
  height: 72px;
  display: flex;
  align-items: center;
  padding-left: 30px;
  border-top: 2px solid #3b464d;
  background: linear-gradient(90deg, #172a35 0, #172a35 1050px, #2a292d 1300px, #1f2a33 1420px, #17303c 1560px, #2c2a2e 1720px, #1c2c36 1920px);
  color: #fff;
}

.tb-weather {
  position: relative;
  width: 36px;
  height: 24px;
  margin-top: 16px;
}

.tb-badge {
  position: absolute;
  left: 16px;
  top: -20px;
  width: 24px;
  height: 26px;
  border-radius: 50%;
  background-color: #ff8f9a;
  text-align: center;
  font-size: 15px;
  line-height: 25px;
  color: #222;
}

.tb-start {
  margin-left: 368px;
}

.tb-search {
  width: 329px;
  height: 46px;
  margin: -2px 0 0 20px;
  padding-left: 18px;
  display: flex;
  align-items: center;
  gap: 15px;
  border: 1px solid #4c5c65;
  border-radius: 23px;
  background-color: #3a4b54;
  color: #c8ccd0;
  font-size: 20px;
}

.tb-apps {
  margin: -1px 0 0 19px;
  display: flex;
  gap: 30px;
}

.tb-app {
  position: relative;
  width: 36px;
  height: 36px;
  display: flex;
  align-items: center;
  justify-content: center;
}

.tb-app.is-open::before {
  content: "";
  position: absolute;
  left: -12px;
  right: -11px;
  top: -13px;
  bottom: -11px;
  border-radius: 6px;
  background-color: #283d48;
}

.tb-app.is-open svg {
  position: relative;
}

.tb-app.is-open::after {
  content: "";
  position: absolute;
  left: 6px;
  right: 6px;
  bottom: -10px;
  height: 5px;
  border-radius: 3px;
  background-color: #4cc2ff;
}

.tb-running::after {
  content: "";
  position: absolute;
  left: 13px;
  bottom: -9px;
  width: 9px;
  height: 5px;
  border-radius: 3px;
  background-color: #9a9c9e;
}

.tb-x {
  position: absolute;
  left: 20px;
  top: -8px;
}

.tray {
  margin-left: 118px;
  display: flex;
  align-items: center;
}

.tr-drive {
  margin-left: 28px;
}

.tr-lang {
  width: 40px;
  margin-left: 25px;
  text-align: center;
  line-height: 24px;
  font-size: 18px;
}

.tr-wifi {
  margin-left: 26px;
}

.tr-vol {
  margin-left: 13px;
}

.tr-batt {
  margin-left: 12px;
}

.tr-clock {
  width: 119px;
  text-align: right;
  line-height: 24px;
}
```
